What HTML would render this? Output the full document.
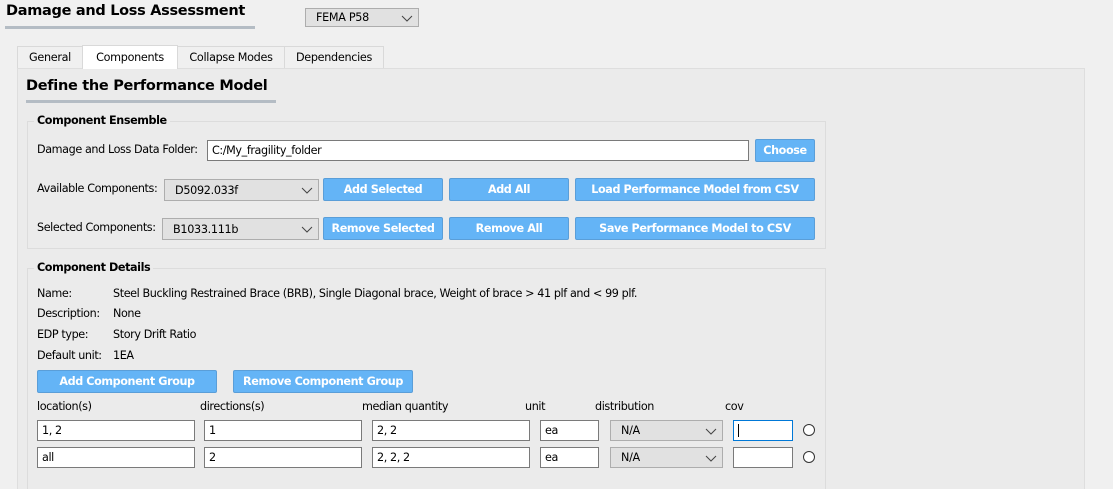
<!DOCTYPE html>
<html style="overflow:hidden;height:489px"><head><meta charset="utf-8"><style>
*{box-sizing:border-box;margin:0;padding:0}
body{width:1113px;height:489px;background:#f0f0f0;font-family:"DejaVu Sans","Liberation Sans",sans-serif;font-size:11px;color:#000;position:relative;overflow:hidden}
.a{position:absolute;white-space:nowrap}
.t{font-size:11.2px;letter-spacing:-0.4px}
.b{font-weight:bold}
.inp{position:absolute;background:#fff;border:1px solid #7a7a7a;padding-left:4px;font-size:11.2px;letter-spacing:-0.4px;display:flex;align-items:center}
.cb{position:absolute;background:#e1e1e1;border:1px solid #adadad;font-size:11.2px;letter-spacing:-0.3px;display:flex;align-items:center;padding-left:10px}
.cb svg{position:absolute;right:5px;top:50%;margin-top:-3px}
.btn{position:absolute;background:#64b4f6;border:1px solid #5a9ed8;border-radius:2px;color:#fff;font-weight:bold;font-size:11.2px;letter-spacing:-0.4px;display:flex;align-items:center;justify-content:center}
.grp{position:absolute;border:1px solid #dcdcdc}
.tab{position:absolute;top:46px;height:22px;border:1px solid #d9d9d9;border-bottom:none;background:#f0f0f0;display:flex;align-items:center;justify-content:center;font-size:11.2px;letter-spacing:-0.3px}
</style></head><body>
<div class="a b" style="left:6px;top:3px;font-size:14.5px;letter-spacing:-0.3px">Damage and Loss Assessment</div>
<div class="a" style="left:5px;top:26px;width:250px;height:3px;background:#b4bcc4"></div>
<div class="cb" style="left:305px;top:8px;width:114px;height:19px;padding-left:10px">FEMA P58<svg width="12" height="7"><path d="M1 1L6 6L11 1" fill="none" stroke="#444"/></svg></div>

<div class="a" style="left:17px;top:68px;width:1068px;height:430px;background:#ebebeb;border:1px solid #dedede"></div>
<div class="tab" style="left:17px;width:66px">General</div>
<div class="tab" style="left:82px;top:45px;height:24px;width:96px;background:#fff">Components</div>
<div class="tab" style="left:177px;width:108px">Collapse Modes</div>
<div class="tab" style="left:284px;width:100px">Dependencies</div>

<div class="a b" style="left:26px;top:78px;font-size:14.5px;letter-spacing:-0.3px">Define the Performance Model</div>
<div class="a" style="left:26px;top:100px;width:250px;height:3px;background:#b4bcc4"></div>

<div class="grp" style="left:27px;top:121px;width:799px;height:128px"></div>
<div class="a b t" style="left:34px;top:114px;background:#ebebeb;padding:0 3px">Component Ensemble</div>
<div class="a t" style="left:37px;top:143px">Damage and Loss Data Folder:</div>
<div class="inp" style="left:207px;top:140px;width:542px;height:21px">C:/My_fragility_folder</div>
<div class="btn" style="left:755px;top:139px;width:60px;height:23px">Choose</div>

<div class="a t" style="left:37px;top:182px">Available Components:</div>
<div class="cb" style="left:164px;top:179px;width:155px;height:22px">D5092.033f<svg width="12" height="7"><path d="M1 1L6 6L11 1" fill="none" stroke="#444"/></svg></div>
<div class="btn" style="left:323px;top:178px;width:120px;height:23px">Add Selected</div>
<div class="btn" style="left:449px;top:178px;width:120px;height:23px">Add All</div>
<div class="btn" style="left:575px;top:178px;width:240px;height:23px">Load Performance Model from CSV</div>

<div class="a t" style="left:37px;top:221px">Selected Components:</div>
<div class="cb" style="left:162px;top:218px;width:157px;height:22px">B1033.111b<svg width="12" height="7"><path d="M1 1L6 6L11 1" fill="none" stroke="#444"/></svg></div>
<div class="btn" style="left:323px;top:217px;width:120px;height:23px">Remove Selected</div>
<div class="btn" style="left:449px;top:217px;width:120px;height:23px">Remove All</div>
<div class="btn" style="left:575px;top:217px;width:240px;height:23px">Save Performance Model to CSV</div>

<div class="grp" style="left:27px;top:268px;width:799px;height:240px"></div>
<div class="a b t" style="left:34px;top:261px;background:#ebebeb;padding:0 3px">Component Details</div>
<div class="a t" style="left:37px;top:287px">Name:</div>
<div class="a t" style="left:113px;top:287px">Steel Buckling Restrained Brace (BRB), Single Diagonal brace, Weight of brace &gt; 41 plf and &lt; 99 plf.</div>
<div class="a t" style="left:37px;top:307px">Description:</div>
<div class="a t" style="left:113px;top:307px">None</div>
<div class="a t" style="left:37px;top:328px">EDP type:</div>
<div class="a t" style="left:113px;top:328px">Story Drift Ratio</div>
<div class="a t" style="left:37px;top:349px">Default unit:</div>
<div class="a t" style="left:113px;top:349px">1EA</div>
<div class="btn" style="left:37px;top:370px;width:180px;height:23px">Add Component Group</div>
<div class="btn" style="left:233px;top:370px;width:180px;height:23px">Remove Component Group</div>

<div class="a t" style="left:37px;top:400px">location(s)</div>
<div class="a t" style="left:200px;top:400px">directions(s)</div>
<div class="a t" style="left:362px;top:400px">median quantity</div>
<div class="a t" style="left:525px;top:400px">unit</div>
<div class="a t" style="left:595px;top:400px">distribution</div>
<div class="a t" style="left:725px;top:400px">cov</div>

<div class="inp" style="left:37px;top:420px;width:158px;height:21px">1, 2</div>
<div class="inp" style="left:204px;top:420px;width:158px;height:21px">1</div>
<div class="inp" style="left:372px;top:420px;width:158px;height:21px">2, 2</div>
<div class="inp" style="left:540px;top:420px;width:59px;height:21px">ea</div>
<div class="cb" style="left:610px;top:420px;width:113px;height:21px">N/A<svg width="12" height="7"><path d="M1 1L6 6L11 1" fill="none" stroke="#444"/></svg></div>
<div class="inp" style="left:733px;top:420px;width:60px;height:21px;border-color:#0078d7"><span style="display:inline-block;width:1px;height:13px;background:#000"></span></div>
<div class="a" style="left:803px;top:424px;width:12px;height:12px;border:1px solid #333;border-radius:50%;background:#fff"></div>

<div class="inp" style="left:37px;top:447px;width:158px;height:21px">all</div>
<div class="inp" style="left:204px;top:447px;width:158px;height:21px">2</div>
<div class="inp" style="left:372px;top:447px;width:158px;height:21px">2, 2, 2</div>
<div class="inp" style="left:540px;top:447px;width:59px;height:21px">ea</div>
<div class="cb" style="left:610px;top:447px;width:113px;height:21px">N/A<svg width="12" height="7"><path d="M1 1L6 6L11 1" fill="none" stroke="#444"/></svg></div>
<div class="inp" style="left:733px;top:447px;width:60px;height:21px"></div>
<div class="a" style="left:803px;top:451px;width:12px;height:12px;border:1px solid #333;border-radius:50%;background:#fff"></div>
</body></html>
